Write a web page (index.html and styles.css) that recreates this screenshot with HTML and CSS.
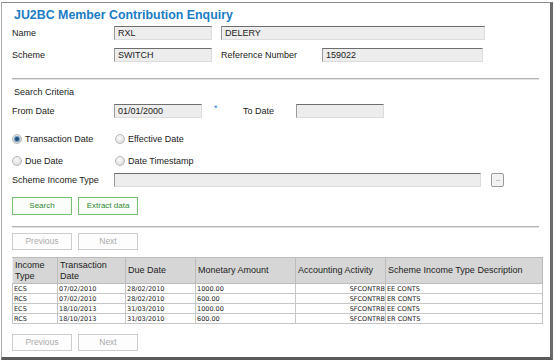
FILE: index.html
```html
<!DOCTYPE html>
<html>
<head>
<meta charset="utf-8">
<link rel="stylesheet" href="styles.css">
</head>
<body>
<div class="frame">
  <h1 class="title">JU2BC Member Contribution Enquiry</h1>

  <div class="row r-name">
    <span class="lbl">Name</span>
    <span class="inp w98">RXL</span>
    <span class="inp w264 ml9">DELERY</span>
  </div>
  <div class="row r-scheme">
    <span class="lbl">Scheme</span>
    <span class="inp w98">SWITCH</span>
    <span class="lbl2 ml9">Reference Number</span>
    <span class="inp w161">159022</span>
  </div>

  <div class="sep sep1"></div>

  <div class="row r-crit"><span class="crit">Search Criteria</span></div>

  <div class="row r-from">
    <span class="lbl">From Date</span>
    <span class="inp w88">01/01/2000</span>
    <span class="star">*</span>
    <span class="lbl3">To Date</span>
    <span class="inp w88"></span>
  </div>

  <div class="row r-rad1">
    <span class="radio-item w103"><span class="radio on"></span>Transaction Date</span>
    <span class="radio-item"><span class="radio"></span>Effective Date</span>
  </div>
  <div class="row r-rad2">
    <span class="radio-item w103"><span class="radio"></span>Due Date</span>
    <span class="radio-item"><span class="radio"></span>Date Timestamp</span>
  </div>

  <div class="row r-sit">
    <span class="lbl">Scheme Income Type</span>
    <span class="inp w367"></span>
    <span class="dots">&middot;&middot;&middot;</span>
  </div>

  <div class="row r-btns">
    <span class="gbtn">Search</span>
    <span class="gbtn">Extract data</span>
  </div>

  <div class="sep sep2"></div>

  <div class="row r-pager1">
    <span class="pbtn">Previous</span>
    <span class="pbtn">Next</span>
  </div>

  <table class="grid">
    <colgroup>
      <col class="c1"><col class="c2"><col class="c3"><col class="c4"><col class="c5"><col class="c6">
    </colgroup>
    <thead>
      <tr>
        <th>Income Type</th>
        <th>Transaction Date</th>
        <th>Due Date</th>
        <th>Monetary Amount</th>
        <th>Accounting Activity</th>
        <th>Scheme Income Type Description</th>
      </tr>
    </thead>
    <tbody>
      <tr><td>ECS</td><td>07/02/2010</td><td>28/02/2010</td><td>1000.00</td><td class="ra">SFCONTRB</td><td>EE CONTS</td></tr>
      <tr><td>RCS</td><td>07/02/2010</td><td>28/02/2010</td><td>600.00</td><td class="ra">SFCONTRB</td><td>ER CONTS</td></tr>
      <tr><td>ECS</td><td>18/10/2013</td><td>31/03/2010</td><td>1000.00</td><td class="ra">SFCONTRB</td><td>EE CONTS</td></tr>
      <tr><td>RCS</td><td>18/10/2013</td><td>31/03/2010</td><td>600.00</td><td class="ra">SFCONTRB</td><td>ER CONTS</td></tr>
    </tbody>
  </table>

  <div class="row r-pager2">
    <span class="pbtn">Previous</span>
    <span class="pbtn">Next</span>
  </div>
</div>
</body>
</html>
```

FILE: styles.css
```css
* { box-sizing: border-box; }
html, body { margin: 0; padding: 0; background: #fff; }
body {
  font-family: "Liberation Sans", Arial, sans-serif;
  font-size: 9px;
  color: #222;
}
.frame {
  margin: 2px 1px 0 1px;
  width: 552px;
  height: 358px;
  border-left: 1px solid #a8a8a8;
  border-top: 1px solid #8a8a8a;
  border-right: 3px solid #6a6a6a;
  border-bottom: 3px solid #5a5a5a;
  padding-left: 10px;
  display: flex;
  flex-direction: column;
}
.title {
  margin: 3px 0 0 2px;
  font-size: 12.4px;
  line-height: 18px;
  height: 18px;
  font-weight: bold;
  color: #1b7cc4;
}
.row { display: flex; align-items: center; height: 14px; }
.lbl { width: 102px; flex: none; }
.lbl2 { width: 101px; flex: none; }
.lbl3 { width: 53px; flex: none; }
.ml9 { margin-left: 9px; }
.inp {
  height: 14px;
  line-height: 12px;
  padding-left: 3px;
  background: #ededed;
  border-top: 1px solid #6e6e6e;
  border-left: 1px solid #9a9a9a;
  border-right: 1px solid #dcdcdc;
  border-bottom: 1px solid #dcdcdc;
  flex: none;
}
.w98 { width: 98px; }
.w88 { width: 88px; }
.w161 { width: 161px; }
.w264 { width: 264px; }
.w367 { width: 367px; }
.r-name { margin-top: 2px; }
.r-scheme { margin-top: 8px; }
.sep {
  width: 527px;
  height: 2px;
  border-top: 1px solid #b4b4b4;
  border-bottom: 1px solid #e2e2e2;
}
.sep1 { margin-top: 16px; }
.r-crit { margin-top: 6px; height: 12px; }
.crit { padding-left: 2px; }
.r-from { margin-top: 6px; }
.star { color: #2a7fd4; width: 41px; padding-left: 12px; align-self: flex-start; line-height: 8px; font-size: 9px; }
.r-rad1 { margin-top: 14px; }
.r-rad2 { margin-top: 8px; }
.w103 { width: 103px; }
.radio-item { display: flex; align-items: center; flex: none; }
.radio {
  width: 10px;
  height: 10px;
  border-radius: 50%;
  border: 1px solid #b8b8b8;
  background: radial-gradient(circle at 40% 35%, #fafafa 0%, #e4e4e4 60%, #cfcfcf 100%);
  margin-right: 3px;
  position: relative;
}
.radio.on::after {
  content: "";
  position: absolute;
  left: 2px; top: 2px;
  width: 4px; height: 4px;
  border-radius: 50%;
  background: #244f78;
  box-shadow: 0 0 1px 1px #5a8fbf;
}
.r-sit { margin-top: 5px; }
.dots {
  margin-left: 10px;
  width: 13px;
  height: 14px;
  border: 1px solid #9a9a9a;
  border-radius: 2px;
  background: #f2f2f2;
  color: #777;
  font-size: 7px;
  line-height: 14px;
  text-align: center;
  letter-spacing: -1px;
}
.r-btns { margin-top: 10px; height: 18px; gap: 6px; }
.gbtn {
  width: 60px;
  height: 18px;
  border: 1px solid #78c078;
  box-shadow: inset 0 0 0 1px #f4fbf4;
  background: #fbfdfb;
  color: #2f8a2f;
  font-size: 8px;
  line-height: 16px;
  text-align: center;
}
.sep2 { margin-top: 11px; }
.r-pager1 { margin-top: 5px; height: 17px; gap: 6px; }
.r-pager2 { margin-top: 10px; height: 17px; gap: 6px; }
.pbtn {
  width: 60px;
  height: 17px;
  border: 1px solid #cdcdcd;
  background: #fdfdfd;
  color: #ababab;
  font-size: 8.5px;
  line-height: 15px;
  text-align: center;
}
.grid {
  margin-top: 7px;
  width: 530px;
  border-collapse: collapse;
  table-layout: fixed;
  border: 1px solid #a0a0a0;
}
.c1 { width: 45px; }
.c2 { width: 68px; }
.c3 { width: 70px; }
.c4 { width: 100px; }
.c5 { width: 90px; }
.c6 { width: 157px; }
.grid th {
  height: 26px;
  background: #d6d6d6;
  border: 1px solid #bcbcbc;
  border-left: 1px solid #f0f0f0;
  text-align: left;
  font-weight: normal;
  font-size: 9px;
  line-height: 11px;
  padding: 0 2px;
  color: #222;
  vertical-align: middle;
}
.grid td {
  height: 10px;
  border: 1px solid #c6c6c6;
  font-family: "DejaVu Sans", Verdana, sans-serif;
  font-size: 6.5px;
  line-height: 8px;
  padding: 0 1px;
  white-space: nowrap;
  overflow: hidden;
  color: #222;
}
.grid td.ra { text-align: right; padding-right: 0; }
```
